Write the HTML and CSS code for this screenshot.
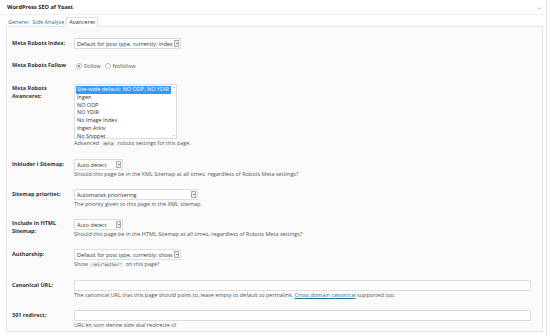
FILE: index.html
```html
<!DOCTYPE html>
<html lang="da">
<head>
  <meta charset="UTF-8" />
  <title>WordPress SEO af Yoast</title>
  <link rel="stylesheet" href="styles.css">
</head>
<body>
  <div class="postbox">
    <div class="hndle">
      <h3>WordPress SEO af Yoast</h3>
      <span class="close">&#9650;</span>
    </div>

    <ul class="tabs">
      <li><a href="#">Generel</a></li>
      <li><a href="#">Side Analyse</a></li>
      <li class="active">Avanceret</li>
    </ul>

    <div class="panel">
      <div class="row gap12">
        <label>Meta Robots Index:</label>
        <div class="field">
          <div class="select w107"><span>Default for post type, currently: index</span><i></i></div>
        </div>
      </div>

      <div class="row gap13">
        <label class="mid">Meta Robots Follow</label>
        <div class="field radios">
          <span class="radio checked"></span><span class="opt">Follow</span>
          <span class="radio"></span><span class="opt">Nofollow</span>
        </div>
      </div>

      <div class="row">
        <label class="two">Meta Robots Avanceret:</label>
        <div class="field">
          <div class="listbox">
            <ul>
              <li class="sel">Site-wide default: NO ODP, NO YDIR</li>
              <li>Ingen</li>
              <li>NO ODP</li>
              <li>NO YDIR</li>
              <li>No Image Index</li>
              <li>Ingen Arkiv</li>
              <li>No Snippet</li>
            </ul>
            <div class="scroll"><b class="up"></b><b class="down"></b></div>
          </div>
          <p class="desc">Advanced <code>meta</code> robots settings for this page.</p>
        </div>
      </div>

      <div class="row">
        <label>Inkluder i Sitemap:</label>
        <div class="field">
          <div class="select w49"><span>Auto detect</span><i></i></div>
          <p class="desc">Should this page be in the XML Sitemap at all times, regardless of Robots Meta settings?</p>
        </div>
      </div>

      <div class="row">
        <label>Sitemap prioritet:</label>
        <div class="field">
          <div class="select w124"><span>Automatisk prioritering</span><i></i></div>
          <p class="desc">The priority given to this page in the XML sitemap.</p>
        </div>
      </div>

      <div class="row">
        <label class="two">Include in HTML Sitemap:</label>
        <div class="field">
          <div class="select w49"><span>Auto detect</span><i></i></div>
          <p class="desc">Should this page be in the HTML Sitemap at all times, regardless of Robots Meta settings?</p>
        </div>
      </div>

      <div class="row">
        <label>Authorship:</label>
        <div class="field">
          <div class="select w107"><span>Default for post type, currently: show</span><i></i></div>
          <p class="desc">Show <code>rel="author"</code> on this page?</p>
        </div>
      </div>

      <div class="row">
        <label>Canonical URL:</label>
        <div class="field">
          <div class="text"></div>
          <p class="desc">The canonical URL that this page should point to, leave empty to default to permalink. <a href="#">Cross domain canonical</a> supported too.</p>
        </div>
      </div>

      <div class="row">
        <label>301 redirect:</label>
        <div class="field">
          <div class="text"></div>
          <p class="desc">URL'en som denne side skal redirecte til</p>
        </div>
      </div>
    </div>
  </div>
</body>
</html>
```

FILE: styles.css
```css
body {
  margin: 0;
  font-family: "Open Sans", sans-serif;
  font-size: 5.5px;
  color: #444;
  background: #fff;
}
.postbox {
  width: 547px;
  height: 336px;
  border-right: 1px solid #e5e5e5;
  box-sizing: border-box;
}
.hndle {
  display: flex;
  justify-content: space-between;
  align-items: center;
  height: 14px;
  padding: 0 5px 0 7px;
  border-bottom: 1px solid #eee;
}
.hndle h3 {
  margin: 0;
  font-size: 5.6px;
  font-weight: bold;
  color: #222;
}
.close {
  font-size: 3.5px;
  color: #aaa;
}
.tabs {
  display: flex;
  margin: 2px 0 0 0;
  padding: 0 0 0 6px;
  list-style: none;
  height: 10px;
}
.tabs li {
  padding: 0 2px;
  line-height: 10px;
}
.tabs a {
  color: #21759b;
  text-decoration: none;
}
.tabs li.active {
  margin-left: 0;
  padding: 0 2px;
  background: #fff;
  border: 1px solid #dfdfdf;
  border-bottom: 1px solid #fff;
  line-height: 9px;
  color: #333;
  position: relative;
  z-index: 1;
}
.panel {
  margin: -1px 3px 0 6px;
  height: 306px;
  padding: 11px 0 0 5px;
  background: #fafafa;
  border: 1px solid #e5e5e5;
  box-sizing: border-box;
}
.row {
  display: grid;
  grid-template-columns: 62px 1fr;
  margin-bottom: 11px;
}
.row.gap12 { margin-bottom: 12px; }
.row.gap13 { margin-bottom: 13px; }
.row label {
  width: 56px;
  font-weight: bold;
  color: #333;
  line-height: 7.5px;
  padding-top: 2px;
}
.row label.two { padding-top: 1px; }
.row label.mid { padding-top: 1px; }
.field {
  padding-right: 11px;
}
.desc {
  margin: 0;
  line-height: 8px;
  color: #555;
}
.desc a {
  color: #21759b;
}
code {
  font-family: "DejaVu Sans Mono", monospace;
  font-size: 4px;
  background: #eaeaea;
  padding: 0 2px;
  margin: 0 1px;
}
.select {
  display: flex;
  align-items: center;
  height: 11px;
  box-sizing: border-box;
  border: 1px solid #ddd;
  background: #fff;
  padding: 0 1px 0 2px;
  color: #333;
  white-space: nowrap;
}
.select span {
  flex: 1;
  overflow: hidden;
}
.select i {
  width: 5px;
  height: 7px;
  box-sizing: border-box;
  border: 1px solid #aaa;
  background: #f0f0f0;
  position: relative;
}
.select i::after {
  content: "";
  position: absolute;
  left: 0.5px;
  top: 2px;
  border-left: 1px solid transparent;
  border-right: 1px solid transparent;
  border-top: 1.5px solid #222;
}
.w107 { width: 107px; }
.w49 { width: 49px; }
.w124 { width: 124px; }
.radios {
  display: flex;
  align-items: center;
  height: 10px;
  color: #555;
}
.radio {
  width: 4px;
  height: 4px;
  border: 1px solid #bbb;
  border-radius: 50%;
  background: #fff;
  position: relative;
  margin-left: 2px;
}
.radios .opt {
  margin: 0 2px 0 2px;
}
.radio.checked::after {
  content: "";
  position: absolute;
  left: 1px;
  top: 1px;
  width: 2px;
  height: 2px;
  border-radius: 50%;
  background: #1e8cbe;
}
.listbox {
  display: flex;
  width: 103px;
  height: 55px;
  box-sizing: border-box;
  border: 1px solid #ddd;
  background: #fff;
}
.listbox ul {
  flex: 1;
  margin: 0;
  padding: 1px 0 0 1px;
  list-style: none;
  color: #333;
}
.listbox li {
  line-height: 7.8px;
  padding-left: 1px;
}
.listbox li.sel {
  background: #3399ff;
  color: #fff;
}
.scroll {
  width: 5px;
  display: flex;
  flex-direction: column;
  justify-content: space-between;
  align-items: center;
  padding: 2px 0;
}
.scroll b {
  border-left: 1px solid transparent;
  border-right: 1px solid transparent;
}
.scroll .up { border-bottom: 1.5px solid #999; }
.scroll .down { border-top: 1.5px solid #999; }
.text {
  height: 11px;
  box-sizing: border-box;
  border: 1px solid #ddd;
  background: #fff;
}
```
